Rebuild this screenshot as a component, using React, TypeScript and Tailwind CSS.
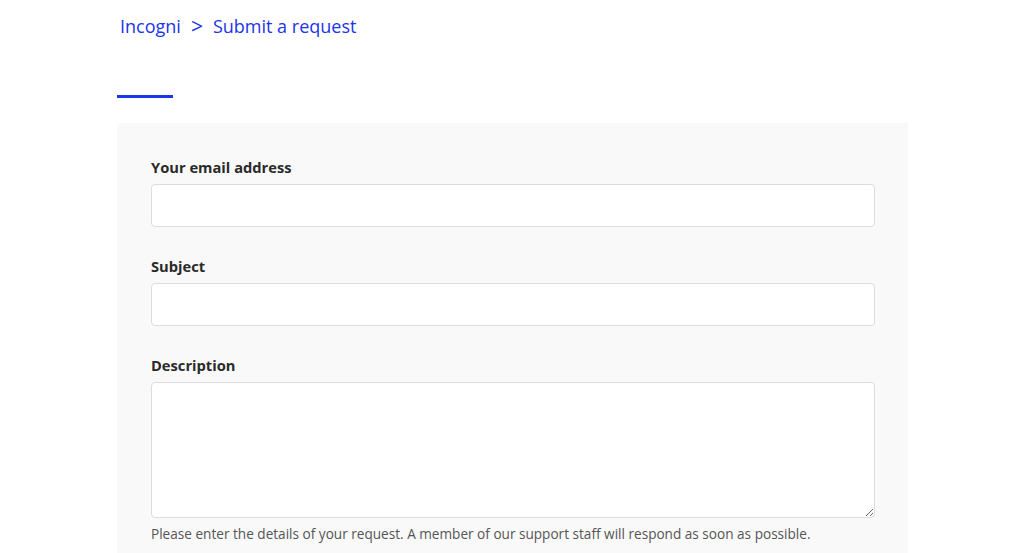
import React from "react";

const font = { fontFamily: '"Open Sans", "Noto Sans", sans-serif' };

function Field({ label, children }: { label: string; children: React.ReactNode }) {
  return (
    <div className="flex flex-col">
      <label className="text-[14.7px] font-bold leading-[21px] text-[#2a2a2a] mb-[6px]">{label}</label>
      {children}
    </div>
  );
}

export default function App() {
  return (
    <div className="min-h-screen bg-white" style={font}>
      <div className="w-[791px] ml-[117px]">
        <nav className="flex items-center pt-[12px] pl-[3px] text-[18px] leading-[28px] text-[#1c34ea]">
          <span>Incogni</span>
          <span className="ml-[10px] mr-[10px] text-[21px]">&gt;</span>
          <span>Submit a request</span>
        </nav>
        <div className="mt-[55px] h-[3px] w-[56px] bg-[#1c34ea]" />
        <form className="mt-[25px] bg-[#f9f9f9] rounded-[2px] pt-[34px] pl-[34px] pr-[33px] pb-[30px] flex flex-col gap-[29px]">
          <Field label="Your email address">
            <input type="email" className="h-[43px] w-full bg-white border border-[#dcdcdc] rounded-[4px] px-3 outline-none" />
          </Field>
          <Field label="Subject">
            <input type="text" className="h-[43px] w-full bg-white border border-[#dcdcdc] rounded-[4px] px-3 outline-none" />
          </Field>
          <div className="flex flex-col">
            <label className="text-[14.7px] font-bold leading-[21px] text-[#2a2a2a] mb-[6px]">Description</label>
            <textarea className="h-[136px] w-full bg-white border border-[#dcdcdc] rounded-[4px] px-3 py-2 outline-none block" />
            <p className="mt-[6px] text-[13.6px] leading-[20px] text-[#555555]">
              Please enter the details of your request. A member of our support staff will respond as soon as possible.
            </p>
          </div>
        </form>
      </div>
    </div>
  );
}
